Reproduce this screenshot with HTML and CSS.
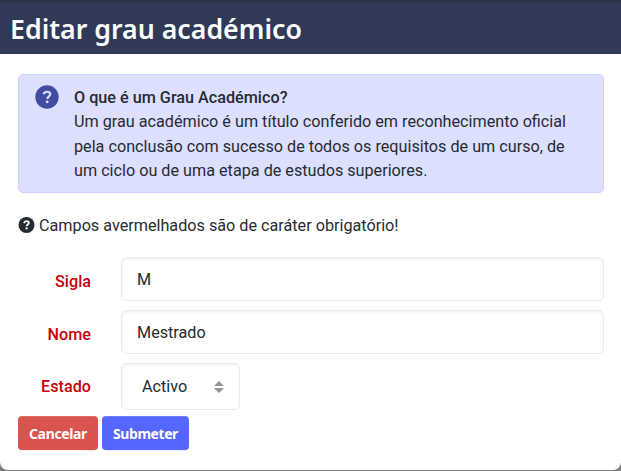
FILE: index.html
```html
<!DOCTYPE html>
<html lang="pt">
<head>
<meta charset="utf-8">
<title>Editar grau académico</title>
<link rel="stylesheet" href="styles.css">
</head>
<body>
<main class="modal">
  <header class="modal-header"><h1><span class="title">Editar grau académico</span></h1></header>
  <form class="modal-body">
    <section class="info">
      <svg class="info-icon" viewBox="0 0 24 24"><circle cx="12" cy="12" r="11.7" fill="#424da0"/><path d="M8.6 9.2Q9.4 6.7 12.1 6.7Q15.3 6.7 15.3 9.3C15.3 11.4 12.3 11.3 12.3 14" fill="none" stroke="#dddfff" stroke-width="2.1"/><circle cx="12.2" cy="16.8" r="1.4" fill="#dddfff"/></svg>
      <div class="info-text">
        <strong>O que é um Grau Académico?</strong>
        <p>Um grau académico é um título conferido em reconhecimento oficial<br>pela conclusão com sucesso de todos os requisitos de um curso, de<br>um ciclo ou de uma etapa de estudos superiores.</p>
      </div>
    </section>
    <p class="note"><svg class="note-icon" viewBox="0 0 24 24"><circle cx="12" cy="12" r="12" fill="#252b33"/><path d="M8.2 9.2Q9.2 6.2 12.1 6.2Q15.5 6.2 15.5 9.1C15.5 11.5 12.2 11.3 12.2 14" fill="none" stroke="#fff" stroke-width="2.7"/><circle cx="12.2" cy="17.2" r="1.7" fill="#fff"/></svg><span>Campos avermelhados são de caráter obrigatório!</span></p>
    <div class="row"><span class="label">Sigla</span><div class="field">M</div></div>
    <div class="row"><span class="label">Nome</span><div class="field">Mestrado</div></div>
    <div class="row row-select"><span class="label">Estado</span><div class="field select"><span>Activo</span><svg class="arrows" viewBox="0 0 10 12"><path d="M0 5L5 0L10 5ZM0 7H10L5 12Z" fill="#929395"/></svg></div></div>
    <div class="actions"><button type="button" class="btn cancel">Cancelar</button><button type="button" class="btn submit">Submeter</button></div>
  </form>
</main>
</body>
</html>
```
FILE: styles.css
```css
* { box-sizing: border-box; }
body { margin: 0; background: #7b7d82; font: 16.2px/24.3px Roboto, sans-serif; color: #252b33; overflow: hidden; }
.modal { height: 470px; background: #fff; border-radius: 0 0 8px 8px; overflow: hidden; }
.modal-header { height: 54px; padding: 1px 0 0 10px; background: #303956; border-top: 2px solid #2c3347; display: flex; align-items: center; }
h1 { margin: 0; font: 600 27px/40px "Noto Sans", sans-serif; color: #fff; white-space: nowrap; }
.title { display: inline-block; transform: scaleX(.99); transform-origin: left; }
.modal-body { padding: 20px 17px 0 18px; }
.info { height: 119px; padding: 10px 15px; display: flex; border: 1px solid #ced2ff; border-radius: 5px; background: #dddfff; }
.info-icon { width: 24px; height: 24px; margin: 0 15px 0 1px; }
.info-text { white-space: nowrap; padding-top: 1px; }
.info-text strong { display: block; font-weight: 500; }
.info p { margin: 0; }
.note { display: flex; align-items: center; gap: 4px; height: 24px; margin: 20px 0; }
.note span { padding-top: 2px; }
.note-icon { width: 17px; height: 16px; }
.row { display: flex; align-items: center; height: 44px; margin-bottom: 9px; }
.label { width: 73px; margin-right: 30px; padding-top: 6px; text-align: right; font-weight: 500; color: #c70007; }
.field { flex: 1; height: 100%; padding: 10px 15px; border: 1px solid #e9eaec; border-radius: 5px; box-shadow: inset 0 2px 3px #0000000d; }
.row-select { height: 47px; margin-bottom: 6px; }
.row-select .label { padding-top: 2px; }
.select { flex: 0 0 119px; display: flex; justify-content: space-between; align-items: center; padding: 1px 15px 0 20px; }
.arrows { width: 10px; height: 12px; }
.actions { display: flex; gap: 4px; }
.btn { height: 34px; border: 0; border-radius: 4px; padding: 2px 0 0; font: 700 14px/20px "Noto Sans", sans-serif; color: #fff; box-shadow: inset 0 1px #ffffff22, 0 1px 1px #00000013; }
.cancel { width: 80px; background: #d9534f; letter-spacing: -.35px; }
.submit { width: 87px; background: #5567ff; letter-spacing: -.45px; }
```
